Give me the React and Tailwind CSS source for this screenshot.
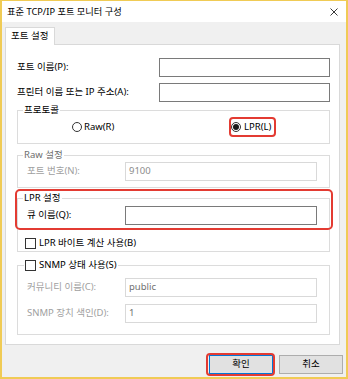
import React from "react";

function Input({ value = "", disabled = false, className = "" }) {
  return (
    <div
      className={`h-[19px] bg-white border flex items-center pl-[3px] ${
        disabled ? "border-[#d9d9d9] text-[#8c8c8c]" : "border-[#7a7a7a] text-black"
      } ${className}`}
    >
      {value}
    </div>
  );
}

function Checkbox() {
  return <span className="inline-block w-[11px] h-[11px] border border-[#333333] bg-white shrink-0" />;
}

function Radio({ checked }) {
  return (
    <span className="w-[10px] h-[10px] rounded-full border border-[#333333] bg-white flex items-center justify-center shrink-0">
      {checked && <span className="w-[6px] h-[6px] rounded-full bg-[#1a1a1a]" />}
    </span>
  );
}

function Group({ legend, legendClass = "", className = "", children }) {
  return (
    <div className={`relative border border-[#dcdcdc] ${className}`}>
      <div className={`absolute left-[5px] top-[-7px] bg-white px-[1px] leading-[12px] flex items-center gap-[3px] ${legendClass}`}>
        {legend}
      </div>
      {children}
    </div>
  );
}

export default function App() {
  return (
    <div className="w-[348px] h-[379px] flex flex-col border-x-2 border-b-2 border-t border-[#f0cb55] bg-[#f0f0f0] font-['Noto_Sans','Noto_Sans_CJK_KR',sans-serif] text-[9.5px] text-black overflow-hidden">
      {/* title bar */}
      <div className="h-[21px] bg-white flex items-center justify-between pl-[5px] pr-[8px] shrink-0">
        <span className="text-[9.25px]">표준 TCP/IP 포트 모니터 구성</span>
        <svg width="8" height="8" viewBox="0 0 8 8" className="mt-[1px]">
          <path d="M0.5 0.5 L7.5 7.5 M7.5 0.5 L0.5 7.5" stroke="#222" strokeWidth="0.9" fill="none" />
        </svg>
      </div>

      {/* body */}
      <div className="flex-1 flex flex-col pt-[5px] pl-[3px]">
        <div className="relative z-10 w-[50px] h-[18px] -mb-px bg-white border-t border-x border-[#d9d9d9] pl-[5px] flex items-center">
          포트 설정
        </div>
        <div className="w-[335px] h-[301px] bg-white border border-[#d9d9d9] pt-[13px] pl-[11px] pr-[9px] flex flex-col">
          <div className="flex items-center justify-between">
            <span>포트 이름(P):</span>
            <Input className="w-[171px]" />
          </div>
          <div className="flex items-center justify-between mt-[6px]">
            <span>프린터 이름 또는 IP 주소(A):</span>
            <Input className="w-[171px]" />
          </div>

          {/* protocol */}
          <Group legend={<span>프로토콜</span>} className="mt-[8px] h-[34px] flex items-center pl-[54px]">
            <div className="w-[157px] flex items-center gap-[2px]">
              <Radio />
              <span>Raw(R)</span>
            </div>
            <div className="h-[20px] flex items-center gap-[3px] border-2 border-[#e33b32] rounded-[4px] pr-[3px]">
              <Radio checked />
              <span>LPR(L)</span>
            </div>
          </Group>

          {/* raw */}
          <Group
            legend={<span>Raw 설정</span>}
            legendClass="text-[#6d6d6d]"
            className="mt-[11px] h-[33px] pt-[6px] pl-[9px]"
          >
            <div className="flex items-center text-[#a0a0a0]">
              <span className="w-[98px]">포트 번호(N):</span>
              <Input disabled value="9100" className="w-[192px]" />
            </div>
          </Group>

          {/* lpr */}
          <Group legend={<span>LPR 설정</span>} className="mt-[10px] h-[54px] pt-[7px]">
            <div className="absolute left-[-3px] top-[-10px] w-[318px] h-[41px] border-2 border-[#e33b32] rounded-[5px]" />
            <div className="flex items-center pl-[9px]">
              <span className="w-[98px]">큐 이름(Q):</span>
              <Input className="w-[192px]" />
            </div>
            <div className="flex items-center gap-[3px] mt-[11px] pl-[7px]">
              <Checkbox />
              <span>LPR 바이트 계산 사용(B)</span>
            </div>
          </Group>

          {/* snmp */}
          <Group
            legend={
              <>
                <Checkbox />
                <span>SNMP 상태 사용(S)</span>
              </>
            }
            legendClass="left-[6px]"
            className="mt-[13px] h-[70px] pt-[12px] pl-[9px]"
          >
            <div className="flex items-center text-[#a0a0a0]">
              <span className="w-[98px]">커뮤니티 이름(C):</span>
              <Input disabled value="public" className="w-[192px] text-[#707070]" />
            </div>
            <div className="flex items-center text-[#a0a0a0] mt-[7px]">
              <span className="w-[98px]">SNMP 장치 색인(D):</span>
              <Input disabled value="1" className="w-[192px] text-[#707070]" />
            </div>
          </Group>
        </div>

        {/* buttons */}
        <div className="flex justify-end gap-[6px] mt-[10px] pr-[3px]">
          <div className="relative">
            <div className="w-[64px] h-[19px] bg-[#e1e1e1] border border-[#0078d7] flex items-center justify-center">
              확인
            </div>
            <div className="absolute left-[-3px] top-[-2px] w-[69px] h-[23px] border-2 border-[#e33b32] rounded-[4px]" />
          </div>
          <div className="w-[64px] h-[19px] bg-[#e1e1e1] border border-[#adadad] flex items-center justify-center">
            취소
          </div>
        </div>
      </div>
    </div>
  );
}
